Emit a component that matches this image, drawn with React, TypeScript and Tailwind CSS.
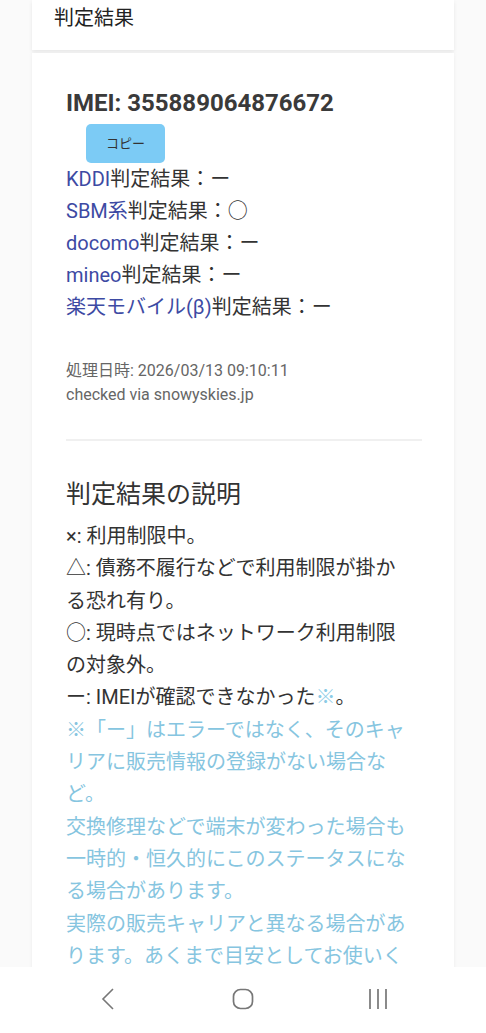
import React from 'react';

const carriers = [
  { name: 'KDDI', result: 'ー' },
  { name: 'SBM系', result: '○' },
  { name: 'docomo', result: 'ー' },
  { name: 'mineo', result: 'ー' },
  { name: '楽天モバイル(β)', result: 'ー' },
];

export default function App() {
  return (
    <div
      className="h-[1033px] bg-[#fafafa] flex flex-col overflow-hidden"
      style={{ fontFamily: 'Roboto, "Noto Sans CJK JP", sans-serif' }}
    >
      <div className="flex-1 overflow-hidden px-[32px] flex flex-col gap-[3px]">
        {/* ヘッダーカード */}
        <div className="bg-white h-[50px] shrink-0 px-[22px] pt-[3px] shadow-[0_2px_4px_rgba(0,0,0,0.08)]">
          <h1 className="text-[20px] leading-[30px] text-[#222]">判定結果</h1>
        </div>

        {/* 結果カード */}
        <div className="bg-white flex-1 pl-[34px] pr-[32px] pt-[35px] shadow-[0_1px_4px_rgba(0,0,0,0.06)]">
          <h2 className="text-[24px] leading-[30px] font-bold text-[#3a3a3a]">IMEI: 355889064876672</h2>
          <button className="ml-[20px] mt-[6px] w-[79px] h-[39px] rounded-[5px] bg-[#7ccbf5] text-[13px] text-[#333]">
            コピー
          </button>
          <div className="text-[20px] leading-[32px] text-[#333]">
            {carriers.map((c) => (
              <div key={c.name}>
                <span className="text-[#3d4aa3]">{c.name}</span>判定結果：{c.result}
              </div>
            ))}
          </div>

          <div className="mt-[36px] text-[16px] leading-[24px] text-[#666]">
            <p>処理日時: 2026/03/13 09:10:11</p>
            <p>checked via snowyskies.jp</p>
          </div>

          <hr className="mt-[32px] border-0 h-[2px] bg-[#f0f0f0]" />

          <h3 className="mt-[36px] text-[25px] leading-[36px] text-[#333]">判定結果の説明</h3>
          <div className="mt-[7px] w-[345px] text-[20px] leading-[32.3px] text-[#333]">
            <p>×: 利用制限中。</p>
            <p>△: 債務不履行などで利用制限が掛かる恐れ有り。</p>
            <p>○: 現時点ではネットワーク利用制限の対象外。</p>
            <p>
              ー: IMEIが確認できなかった<span className="text-[#8ccbe6]">※</span>。
            </p>
            <div className="text-[#86c5e0]">
              <p>※「ー」はエラーではなく、そのキャリアに販売情報の登録がない場合など。</p>
              <p>交換修理などで端末が変わった場合も一時的・恒久的にこのステータスになる場合があります。</p>
              <p>実際の販売キャリアと異なる場合があります。あくまで目安としてお使いください。</p>
            </div>
          </div>
        </div>
      </div>

      {/* ナビゲーションバー */}
      <div className="h-[66px] shrink-0 bg-white grid grid-cols-3 items-center px-[40px] pb-[2px] text-[#777]">
        <div className="flex justify-center">
          <svg width="14" height="22" viewBox="0 0 14 22" fill="none" stroke="currentColor" strokeWidth="1.6">
            <path d="M12 1 L2 11 L12 21" />
          </svg>
        </div>
        <div className="flex justify-center">
          <svg width="22" height="22" viewBox="0 0 22 22" fill="none" stroke="currentColor" strokeWidth="1.7">
            <rect x="1.5" y="1.5" width="19" height="19" rx="7" />
          </svg>
        </div>
        <div className="flex justify-center">
          <svg width="20" height="22" viewBox="0 0 20 22" fill="none" stroke="currentColor" strokeWidth="1.7">
            <path d="M2 1 V21 M10 1 V21 M18 1 V21" />
          </svg>
        </div>
      </div>
    </div>
  );
}
